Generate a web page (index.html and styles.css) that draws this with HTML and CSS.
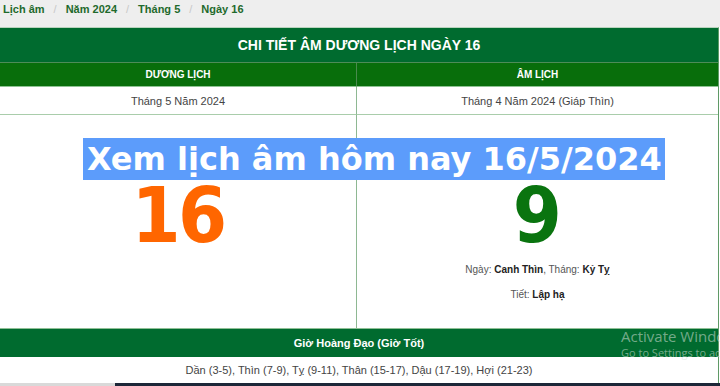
FILE: index.html
```html
<!DOCTYPE html>
<html lang="vi">
<head>
<meta charset="utf-8">
<title>Lịch âm ngày 16/5/2024</title>
<link rel="stylesheet" href="styles.css">
</head>
<body>
<nav class="crumbs">
  <a class="crumb">Lịch âm</a><span class="sep">/</span>
  <a class="crumb">Năm 2024</a><span class="sep">/</span>
  <a class="crumb">Tháng 5</a><span class="sep">/</span>
  <a class="crumb">Ngày 16</a>
</nav>
<main class="cal">
  <div class="title">CHI TIẾT ÂM DƯƠNG LỊCH NGÀY 16</div>
  <div class="grid">
    <div class="head">DƯƠNG LỊCH</div>
    <div class="head">ÂM LỊCH</div>
    <div class="month">Tháng 5 Năm 2024</div>
    <div class="month">Tháng 4 Năm 2024 (Giáp Thìn)</div>
    <div class="day">
      <div class="num solar">16</div>
    </div>
    <div class="day">
      <div class="num lunar">9</div>
      <p class="info first">Ngày: <b>Canh Thìn</b>, Tháng: <b>Kỷ Tỵ</b></p>
      <p class="info">Tiết: <b>Lập hạ</b></p>
    </div>
  </div>
  <div class="title small">Giờ Hoàng Đạo (Giờ Tốt)</div>
  <div class="hours">Dần (3-5), Thìn (7-9), Tỵ (9-11), Thân (15-17), Dậu (17-19), Hợi (21-23)</div>
</main>
<div class="strip"><span class="light"></span><span class="dark"></span></div>
<div class="overlay">Xem lịch âm hôm nay 16/5/2024</div>
<div class="activate">
  <div class="a1">Activate Windows</div>
  <div class="a2">Go to Settings to activate Windows.</div>
</div>
</body>
</html>
```
FILE: styles.css
```css
* { box-sizing: border-box; }
html, body { margin: 0; padding: 0; }
body {
  width: 720px;
  height: 386px;
  overflow: hidden;
  background: #fff;
  font-family: "Liberation Sans", Arial, sans-serif;
  color: #333;
  position: relative;
}
.crumbs {
  height: 27px;
  background: #eeeeee;
  display: flex;
  align-items: center;
  padding: 0 0 10px 3px;
  font-size: 11px;
  font-weight: bold;
}
.crumb { color: #1f6a2c; text-decoration: none; }
.sep { color: #c8c8c8; font-weight: normal; margin: 0 9px 0 9px; }
.cal {
  width: 719px;
  border-top: 1px solid #b9d3bd;
  border-right: 1px solid #5f9a66;
}
.title {
  height: 35px;
  background: #006b2f;
  color: #fff;
  font-weight: bold;
  font-size: 14px;
  display: flex;
  align-items: center;
  justify-content: center;
  border-bottom: 1px solid #4e8c58;
}
.title.small {
  height: 29px;
  font-size: 11px;
  border-top: 1px solid #8fbf95;
  border-bottom: 0;
}
.grid {
  display: grid;
  grid-template-columns: 357px 1fr;
}
.head {
  height: 24px;
  background: #086e0b;
  color: #fff;
  font-weight: bold;
  font-size: 10px;
  display: flex;
  align-items: center;
  justify-content: center;
  border-bottom: 1px solid #8fc494;
}
.head:first-child { border-right: 1px solid #4a8a4e; }
.month {
  height: 28px;
  font-size: 11px;
  color: #444;
  display: flex;
  align-items: center;
  justify-content: center;
  border-bottom: 1px solid #a9cdab;
}
.month:nth-child(3) { border-right: 1px solid #8eb892; }
.day {
  height: 213px;
  display: flex;
  flex-direction: column;
  align-items: center;
}
.day:nth-child(5) { border-right: 1px solid #8eb892; }
.num {
  margin-top: 63px;
  font-family: "DejaVu Sans", Verdana, sans-serif;
  font-weight: bold;
  font-size: 76px;
  line-height: 76px;
  transform: scaleX(0.93);
}
.solar { color: #ff6600; letter-spacing: -3px; }
.lunar { color: #0a740f; }
.info {
  margin: 9px 0 0;
  font-size: 10px;
  line-height: 14px;
  color: #555;
}
.info + .info { margin-top: 11px; }
.info b { color: #222; }
.hours {
  height: 26px;
  font-size: 11px;
  color: #444;
  display: flex;
  align-items: center;
  justify-content: center;
}
.strip {
  display: flex;
  height: 4px;
}
.strip .light { width: 115px; background: #d9d9d9; }
.strip .dark { flex: 1; background: #1d2738; }
.overlay {
  position: absolute;
  left: 83px;
  top: 138px;
  width: 582px;
  height: 42px;
  background: #5c9cfb;
  color: #fff;
  font-family: "DejaVu Sans", Verdana, sans-serif;
  font-weight: bold;
  font-size: 32px;
  line-height: 42px;
  padding-left: 4px;
  white-space: nowrap;
}
.activate {
  position: absolute;
  left: 621px;
  top: 326px;
  white-space: nowrap;
  color: rgba(215, 225, 218, 0.55);
  font-family: "Open Sans", "Liberation Sans", sans-serif;
}
.a1 { font-size: 15px; line-height: 20px; }
.a2 { font-size: 11px; line-height: 14px; }
```
